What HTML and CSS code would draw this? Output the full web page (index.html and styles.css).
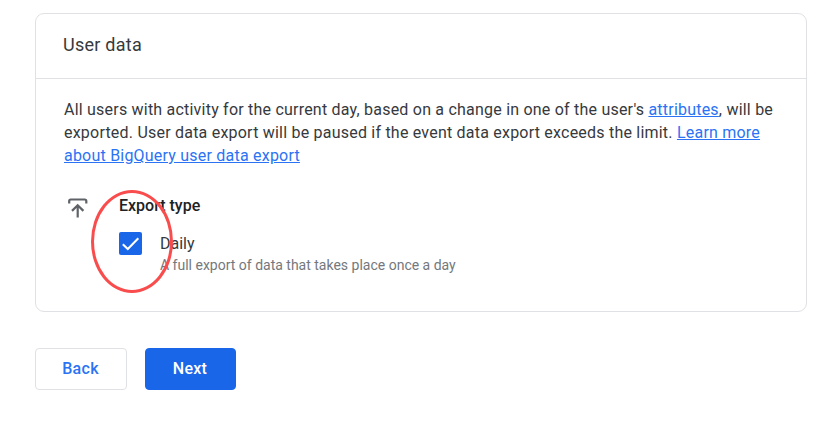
FILE: index.html
```html
<!DOCTYPE html>
<html lang="en">
<head>
  <meta charset="UTF-8" />
  <meta name="viewport" content="width=device-width, initial-scale=1.0" />
  <title>User data export</title>
  <link rel="stylesheet" href="styles.css">
</head>
<body>
  <div class="card">
    <h2 class="card-title">User data</h2>
    <div class="card-body">
      <p class="description">All users with activity for the current day, based on a change in one of the user's <a href="#">attributes</a>, will be exported. User data export will be paused if the event data export exceeds the limit. <a href="#">Learn more about BigQuery user data export</a></p>

      <div class="export">
        <svg class="export-icon" viewBox="0 0 20 20" fill="none" stroke="#5f6368" stroke-width="2.2">
          <path d="M1.200 5.500V3Q1.200 1.500 2.700 1.500H16.800Q18.300 1.500 18.300 3V5.500" />
          <path d="M9.700 19.500V7.500M4 12.900L9.700 7.200L15.400 12.900" />
        </svg>
        <div>
          <h3 class="export-title">Export type</h3>
          <div class="option">
            <label class="checkbox">
              <input type="checkbox" checked />
              <svg viewBox="0 0 23 23" fill="none" stroke="#fff" stroke-width="2"><path d="M3.800 12.200L8.800 17L19.300 6.300" /></svg>
            </label>
            <div>
              <div class="option-name">Daily</div>
              <div class="option-hint">A full export of data that takes place once a day</div>
            </div>
            <!-- highlight around the checkbox -->
            <span class="highlight"></span>
          </div>
        </div>
      </div>
    </div>
  </div>

  <div class="actions">
    <button class="btn">Back</button>
    <button class="btn btn-primary">Next</button>
  </div>
</body>
</html>
```
FILE: styles.css
```css
* {
  box-sizing: border-box;
}
body {
  font-family: Roboto, "Liberation Sans", sans-serif;
  margin: 0;
  padding: 13px 12px 0 35px;
  background: #fff;
  color: #36393d;
}
.card {
  height: 299px;
  border: 1px solid #dfe1e4;
  border-radius: 9px;
}
.card-title {
  height: 65px;
  margin: 0;
  padding-left: 27px;
  border-bottom: 1px solid #dfe1e4;
  font-size: 18px;
  font-weight: 400;
  line-height: 62px;
  letter-spacing: 0.25px;
}
.card-body {
  padding: 19px 28px 0;
}
.description {
  margin: 0;
  font-size: 16px;
  line-height: 23px;
  letter-spacing: 0.215px;
}
.description a {
  color: #2a73f5;
}
.export {
  display: flex;
  gap: 31px;
  margin-top: 29px;
}
.export-icon {
  width: 20px;
  height: 20px;
  margin: 2px 0 0 4px;
}
.export-title {
  margin: 0;
  color: #202124;
  font-size: 16px;
  font-weight: 500;
  line-height: 20px;
}
.option {
  position: relative;
  display: flex;
  gap: 18px;
  margin-top: 16px;
}
.checkbox {
  width: 23px;
  height: 23px;
  border-radius: 2px;
  background: #1a66e9;
}
.checkbox input {
  display: none;
}
.checkbox svg {
  display: block;
}
.option-name {
  font-size: 16px;
  line-height: 23px;
}
.option-hint {
  color: #74787d;
  font-size: 14px;
  line-height: 20px;
}
.highlight {
  position: absolute;
  top: -42px;
  left: -28px;
  width: 82px;
  height: 103px;
  border: 3px solid #f94d4d;
  border-radius: 50%;
}
.actions {
  display: flex;
  gap: 18px;
  margin-top: 36px;
}
.btn {
  width: 92px;
  height: 42px;
  padding: 0 1px 2px 0;
  border: 1px solid #dfe1e4;
  border-radius: 4px;
  background: #fff;
  color: #2a73f5;
  font-family: Roboto, sans-serif;
  font-size: 16px;
  font-weight: 500;
  letter-spacing: 0.3px;
}
.btn-primary {
  width: 91px;
  border-color: #1a66e9;
  background: #1a66e9;
  color: #fff;
}
```
